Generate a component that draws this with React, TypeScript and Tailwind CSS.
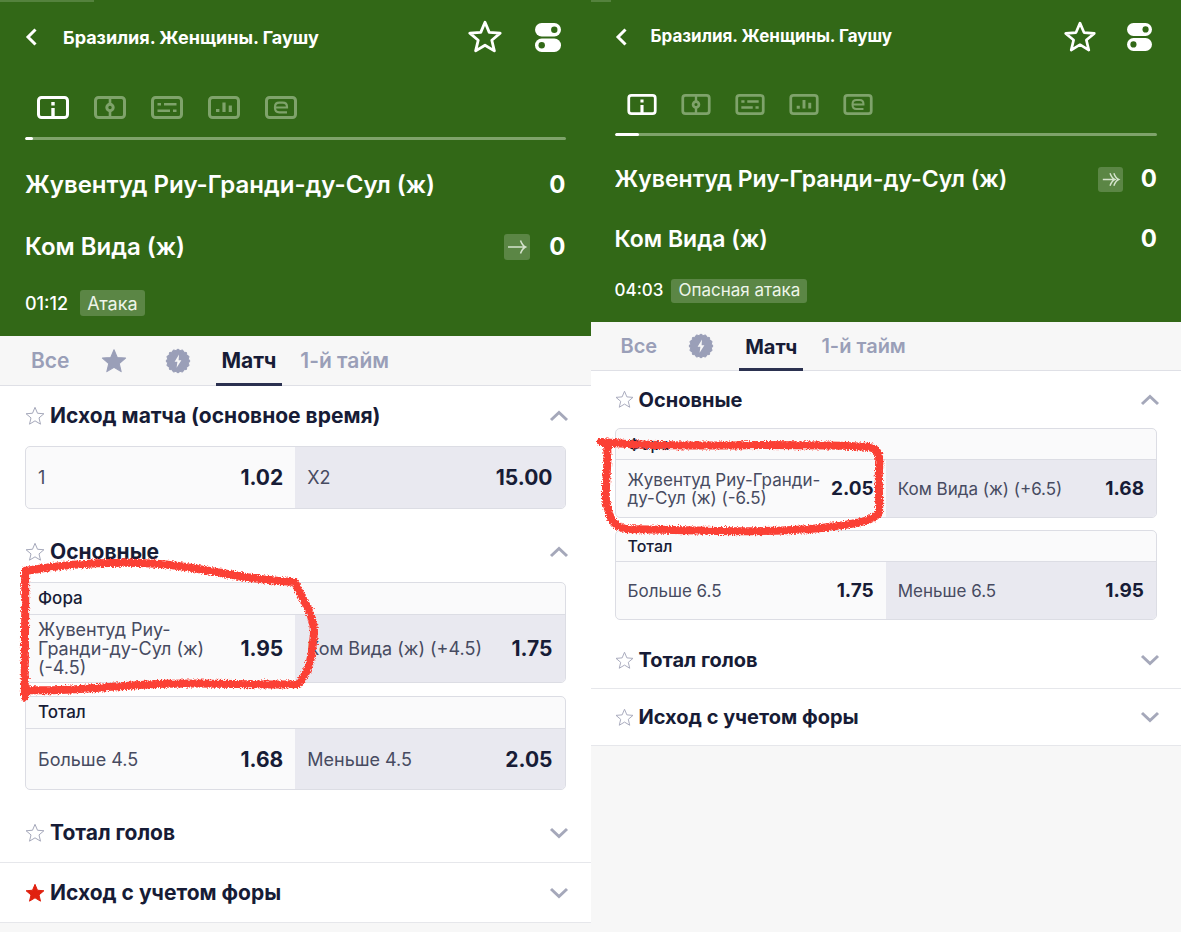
import { ReactNode } from 'react'
import { clsx } from 'clsx'

const large = {
  gutter: 'px-[25px]',
  header: 'h-[336px]',
  strip: 'w-[94px]',
  titleRow: 'mt-[10px] h-[50px]',
  title: 'text-[18px] ml-[26px]',
  headerStar: 'size-[34px]',
  toggles: 'w-[26px] ml-[33px] mr-[5px]',
  icons: 'mt-[34px] gap-[25px] pl-[12px]',
  icon: 'h-[23px] w-[32px]',
  bar: 'mt-[18px]',
  fill: 'w-[8px]',
  teams: 'mt-[14px]',
  team: 'h-[62px] text-[24px]',
  attack: 'size-[26px] mr-[19px]',
  status: 'mt-[12px] h-[26px] gap-[12px] text-[18px]',
  chip: 'h-[26px]',
  tabs: 'h-[50px] text-[21px]',
  heading: 'h-[60px] text-[21px]',
  headingIcon: 'size-[20px]',
  groups: 'gap-[13px] pb-[13px]',
  groupTitle: 'h-[32px] text-[17px]',
  cell: 'text-[18px] leading-[19px]',
  odds: 'text-[21px]',
}

const small: typeof large = {
  gutter: 'px-[24px]',
  header: 'h-[322px]',
  strip: 'w-[20px]',
  titleRow: 'mt-[10px] h-[50px]',
  title: 'text-[17px] ml-[24px]',
  headerStar: 'size-[32px]',
  toggles: 'w-[25px] ml-[31px] mr-[5px]',
  icons: 'mt-[32px] gap-[24px] pl-[12px]',
  icon: 'h-[21px] w-[30px]',
  bar: 'mt-[18px]',
  fill: 'w-[24px]',
  teams: 'mt-[13px]',
  team: 'h-[60px] text-[23px]',
  attack: 'size-[25px] mr-[18px]',
  status: 'mt-[10px] h-[24px] gap-[8px] text-[17px]',
  chip: 'h-[24px]',
  tabs: 'h-[49px] text-[20px]',
  heading: 'h-[57px] text-[20px]',
  headingIcon: 'size-[19px]',
  groups: 'gap-[12px] pb-[12px]',
  groupTitle: 'h-[31px] text-[16px]',
  cell: 'text-[17px] leading-[18px]',
  odds: 'text-[19px]',
}

type Size = typeof large

const STAR = 'M12 1.6l3 7.1 7.7.6-5.9 5 1.8 7.5L12 17.8l-6.6 4 1.8-7.5-5.9-5 7.7-.6z'

function Star({ className, filled, weight = 1 }: { className?: string; filled?: boolean; weight?: number }) {
  return (
    <svg
      viewBox="0 0 24 24"
      className={className}
      fill={filled ? 'currentColor' : 'none'}
      stroke="currentColor"
      strokeWidth={weight}
      strokeLinejoin="round"
      aria-hidden="true"
    >
      <path d={STAR} />
    </svg>
  )
}

const badgePoints = Array.from({ length: 32 }, (_, i) => {
  const r = i % 2 ? 10.6 : 12
  const a = (i * Math.PI) / 16
  return `${(13 + r * Math.sin(a)).toFixed(2)},${(13 - r * Math.cos(a)).toFixed(2)}`
}).join(' ')

function BoltBadge() {
  return (
    <svg viewBox="0 0 26 26" className="size-[26px]" aria-hidden="true">
      <polygon points={badgePoints} fill="currentColor" stroke="currentColor" strokeWidth="1" strokeLinejoin="round" />
      <path d="M14 6.6L9.6 13.8h2.8l-.8 6 4.8-7.6h-2.8z" fill="#f7f7f7" />
    </svg>
  )
}

function Chevron({ open }: { open: boolean }) {
  return (
    <svg viewBox="0 0 20 12" className="-mr-[3px] h-[12px] w-[20px] text-[#a5a8ba]" fill="none" stroke="currentColor" strokeWidth="3" aria-hidden="true">
      <path d={open ? 'M2 10l8-7.500 8 7.500' : 'M2 2l8 7.500 8-7.500'} />
    </svg>
  )
}

function Toggles({ className }: { className: string }) {
  return (
    <svg viewBox="0 0 26 29" className={className} aria-hidden="true">
      <rect width="26" height="13.4" rx="6.7" fill="#fff" />
      <rect y="15.6" width="26" height="13.4" rx="6.7" fill="#fff" />
      <circle cx="19.3" cy="6.7" r="3.2" fill="#326817" />
      <circle cx="6.7" cy="22.3" r="3.2" fill="#326817" />
    </svg>
  )
}

const views: { name: string; mark: ReactNode }[] = [
  { name: 'Информация', mark: <path d="M16 6v3.4M16 12v9.6" strokeWidth="3.4" /> },
  {
    name: 'Поле',
    mark: (
      <>
        <circle cx="16" cy="11.5" r="3.2" strokeWidth="3" />
        <path d="M16 2v6M16 15v6" />
      </>
    ),
  },
  { name: 'Комментарии', mark: <path d="M6.5 8.2H10M13 8.2h12.5M6.5 14.8H19M22 14.8h3.500" /> },
  { name: 'Статистика', mark: <path d="M8 14.5h3.4M16 6.5V16M22.3 9.5V16" strokeWidth="3.2" /> },
  { name: 'Киберспорт', mark: <path d="M10 11.5h12V11q0-4.3-4.3-4.3h-3.4Q10 6.7 10 11v1q0 4.300 4.300 4.300H22" strokeWidth="2.200" /> },
]

function ViewIcon({ mark, className }: { mark: ReactNode; className: string }) {
  return (
    <svg viewBox="0 0 32 23" className={className} fill="none" stroke="currentColor" strokeWidth="2.6" aria-hidden="true">
      <rect x="1.5" y="1.5" width="29" height="20" rx="3" strokeWidth="3" />
      {mark}
    </svg>
  )
}

function Attack({ danger, className }: { danger: boolean; className: string }) {
  return (
    <span className={clsx('rounded-[3px] bg-[#5b8645] text-[#d5e3cd]', className)}>
      <svg viewBox="0 0 26 26" fill="none" stroke="currentColor" strokeWidth="1.5" aria-hidden="true">
        {danger ? (
          <path d="M5 13h11M12.5 6.5q1.8 5 5 6.5-3.2 1.5-5 6.5M16.5 6.5q1.8 5 5 6.5-3.2 1.5-5 6.5" />
        ) : (
          <path d="M4 13h17.5M16.5 6.5q1.8 5 5 6.5-3.2 1.5-5 6.5" />
        )}
      </svg>
    </span>
  )
}

interface Team {
  name: string
  score: number
  attack?: 'normal' | 'danger'
}

interface HeaderProps {
  s: Size
  teams: Team[]
  time: string
  status: string
}

function MatchHeader({ s, teams, time, status }: HeaderProps) {
  return (
    <header className={clsx('bg-[#326817] text-white', s.header)}>
      <div className={clsx('h-[2px] bg-[#54823d]', s.strip)} />
      <div className={s.gutter}>
        <div className={clsx('flex items-center', s.titleRow)}>
          <button type="button" aria-label="Назад">
            <svg viewBox="0 0 12 18" className="h-[18px] w-[12px]" fill="none" stroke="currentColor" strokeWidth="3" aria-hidden="true">
              <path d="M10.5 1.5L3 9l7.5 7.5" />
            </svg>
          </button>
          <h1 className={clsx('min-w-0 flex-1 truncate font-bold', s.title)}>Бразилия. Женщины. Гаушу</h1>
          <button type="button" aria-label="В избранное">
            <Star className={s.headerStar} weight={2} />
          </button>
          <button type="button" aria-label="Настройки">
            <Toggles className={s.toggles} />
          </button>
        </div>
        <nav className={clsx('flex', s.icons)}>
          {views.map((v, i) => (
            <button key={v.name} type="button" aria-label={v.name} className={i === 0 ? 'text-white' : 'text-[#7fa36b]'}>
              <ViewIcon mark={v.mark} className={s.icon} />
            </button>
          ))}
        </nav>
        <div className={clsx('h-[3px] overflow-hidden rounded-full bg-[#7fa36b]', s.bar)}>
          <div className={clsx('h-full rounded-full bg-white', s.fill)} />
        </div>
        <div className={s.teams}>
          {teams.map((t) => (
            <div key={t.name} className={clsx('flex items-center font-semibold', s.team)}>
              <span className="min-w-0 flex-1 truncate">{t.name}</span>
              {t.attack && <Attack danger={t.attack === 'danger'} className={s.attack} />}
              <span className="text-[24px] font-bold">{t.score}</span>
            </div>
          ))}
        </div>
        <div className={clsx('flex items-center', s.status)}>
          <time className="font-medium">{time}</time>
          <span className={clsx('flex items-center rounded-[3px] bg-[#5b8645] px-[7px] text-[#eef5ea]', s.chip)}>{status}</span>
        </div>
      </div>
    </header>
  )
}

function Tabs({ s, withStar }: { s: Size; withStar?: boolean }) {
  return (
    <nav className={clsx('flex gap-[12px] border-b border-[#dfe0e6] bg-[#f7f7f7] font-semibold text-[#9a9fb8]', s.gutter, s.tabs)}>
      <button type="button" className="px-[6px]">Все</button>
      {withStar && (
        <button type="button" aria-label="Избранное" className="flex w-[52px] items-center justify-center">
          <Star className="size-[26px]" filled />
        </button>
      )}
      <button type="button" aria-label="Быстрые ставки" className="flex w-[52px] items-center justify-center">
        <BoltBadge />
      </button>
      <button type="button" className="-mb-px border-b-[3px] border-[#2b3150] px-[6px] pt-[3px] font-bold text-[#171c36]">Матч</button>
      <button type="button" className="px-[6px]">1-й тайм</button>
    </nav>
  )
}

interface HeadingProps {
  s: Size
  title: string
  open?: boolean
  favorite?: boolean
}

function Heading({ s, title, open = false, favorite }: HeadingProps) {
  return (
    <div className={clsx('flex items-center', s.gutter, s.heading, !open && 'border-b border-[#e6e7eb]')}>
      <button type="button" aria-label={`В избранное: ${title}`} className={favorite ? 'text-[#e0210f]' : 'text-[#a5a8ba]'}>
        <Star className={s.headingIcon} filled={favorite} weight={1.2} />
      </button>
      <button type="button" aria-expanded={open} className="ml-[5px] flex flex-1 items-center justify-between text-left font-bold text-[#171c36]">
        {title}
        <Chevron open={open} />
      </button>
    </div>
  )
}

interface Outcome {
  label: string
  odds: string
}

interface GroupProps {
  s: Size
  title?: string
  row: string
  outcomes: Outcome[]
  children?: ReactNode
}

function Group({ s, title, row, outcomes, children }: GroupProps) {
  return (
    <div className="relative">
      <div className="overflow-hidden rounded-[5px] border border-[#dcdde4] bg-[#fafafb]">
        {title && (
          <div className={clsx('flex items-center border-b border-[#dcdde4] px-[12px] font-medium text-[#171c36]', s.groupTitle)}>
            {title}
          </div>
        )}
        <div className={clsx('grid grid-cols-2', row)}>
          {outcomes.map((o, i) => (
            <button
              key={o.label}
              type="button"
              className={clsx('flex items-center justify-between gap-[6px] px-[12px] text-left', i === 1 && 'bg-[#e9e9f0]', s.cell)}
            >
              <span className="text-[#474b61]">{o.label}</span>
              <span className={clsx('font-bold text-[#171c36]', s.odds)}>{o.odds}</span>
            </button>
          ))}
        </div>
      </div>
      {children}
    </div>
  )
}

// Freehand marker loop drawn over a group
function Marker({ id, className, viewBox, d }: { id: string; className: string; viewBox: string; d: string }) {
  return (
    <svg viewBox={viewBox} className={clsx('pointer-events-none absolute z-10 max-w-none overflow-visible', className)} aria-hidden="true">
      <filter id={id} x="-10%" y="-10%" width="120%" height="120%">
        <feTurbulence type="fractalNoise" baseFrequency="0.7" numOctaves="2" seed="4" />
        <feDisplacementMap in="SourceGraphic" scale="5" xChannelSelector="R" yChannelSelector="G" />
      </filter>
      <g filter={`url(#${id})`} fill="none" stroke="#fb3f35" strokeWidth="8" strokeLinecap="round" strokeLinejoin="round">
        <path d={d} />
      </g>
    </svg>
  )
}

export default function App() {
  return (
    <main className="grid min-h-screen grid-cols-2 bg-[#f7f7f7] font-['Inter','Noto_Sans',sans-serif]">
      <section className="min-w-0">
        <MatchHeader
          s={large}
          teams={[
            { name: 'Жувентуд Риу-Гранди-ду-Сул (ж)', score: 0 },
            { name: 'Ком Вида (ж)', score: 0, attack: 'normal' },
          ]}
          time="01:12"
          status="Атака"
        />
        <Tabs s={large} withStar />
        <div className="bg-white">
          <Heading s={large} title="Исход матча (основное время)" open />
          <div className={clsx('flex flex-col', large.gutter, large.groups)}>
            <Group s={large} row="h-[61px]" outcomes={[{ label: '1', odds: '1.02' }, { label: 'X2', odds: '15.00' }]} />
          </div>
          <Heading s={large} title="Основные" open />
          <div className={clsx('flex flex-col', large.gutter, large.groups)}>
            <Group
              s={large}
              title="Фора"
              row="h-[67px]"
              outcomes={[
                { label: 'Жувентуд Риу-Гранди-ду-Сул (ж) (-4.5)', odds: '1.95' },
                { label: 'Ком Вида (ж) (+4.5)', odds: '1.75' },
              ]}
            >
              <Marker
                id="rough-a"
                className="-top-[27px] -left-[5px] h-[146px] w-[300px]"
                viewBox="20 555 300 146"
                d="M25 697C24 660 26 610 25 571C60 565 110 561 160 564C210 568 240 580 295 582C301 599 314 612 314 633C312 655 310 672 298 684C250 686 200 681 140 685C100 687 60 692 26 690"
              />
            </Group>
            <Group s={large} title="Тотал" row="h-[60px]" outcomes={[{ label: 'Больше 4.5', odds: '1.68' }, { label: 'Меньше 4.5', odds: '2.05' }]} />
          </div>
          <Heading s={large} title="Тотал голов" />
          <Heading s={large} title="Исход с учетом форы" favorite />
        </div>
      </section>

      <section className="min-w-0">
        <MatchHeader
          s={small}
          teams={[
            { name: 'Жувентуд Риу-Гранди-ду-Сул (ж)', score: 0, attack: 'danger' },
            { name: 'Ком Вида (ж)', score: 0 },
          ]}
          time="04:03"
          status="Опасная атака"
        />
        <Tabs s={small} />
        <div className="bg-white">
          <Heading s={small} title="Основные" open />
          <div className={clsx('flex flex-col', small.gutter, small.groups)}>
            <Group
              s={small}
              title="Фора"
              row="h-[57px]"
              outcomes={[
                { label: 'Жувентуд Риу-Гранди-ду-Сул (ж) (-6.5)', odds: '2.05' },
                { label: 'Ком Вида (ж) (+6.5)', odds: '1.68' },
              ]}
            >
              <Marker
                id="rough-b"
                className="top-[7px] -left-[19px] h-[100px] w-[290px]"
                viewBox="595 435 290 100"
                d="M600 442C640 446 700 446 760 445C800 445 840 445 868 447C879 449 879 458 878 470C877 485 879 500 878 512C874 522 850 524 820 528C760 534 680 530 625 529C610 527 607 512 605 500C604 480 608 460 606 446"
              />
            </Group>
            <Group s={small} title="Тотал" row="h-[57px]" outcomes={[{ label: 'Больше 6.5', odds: '1.75' }, { label: 'Меньше 6.5', odds: '1.95' }]} />
          </div>
          <Heading s={small} title="Тотал голов" />
          <Heading s={small} title="Исход с учетом форы" />
        </div>
      </section>
    </main>
  )
}
